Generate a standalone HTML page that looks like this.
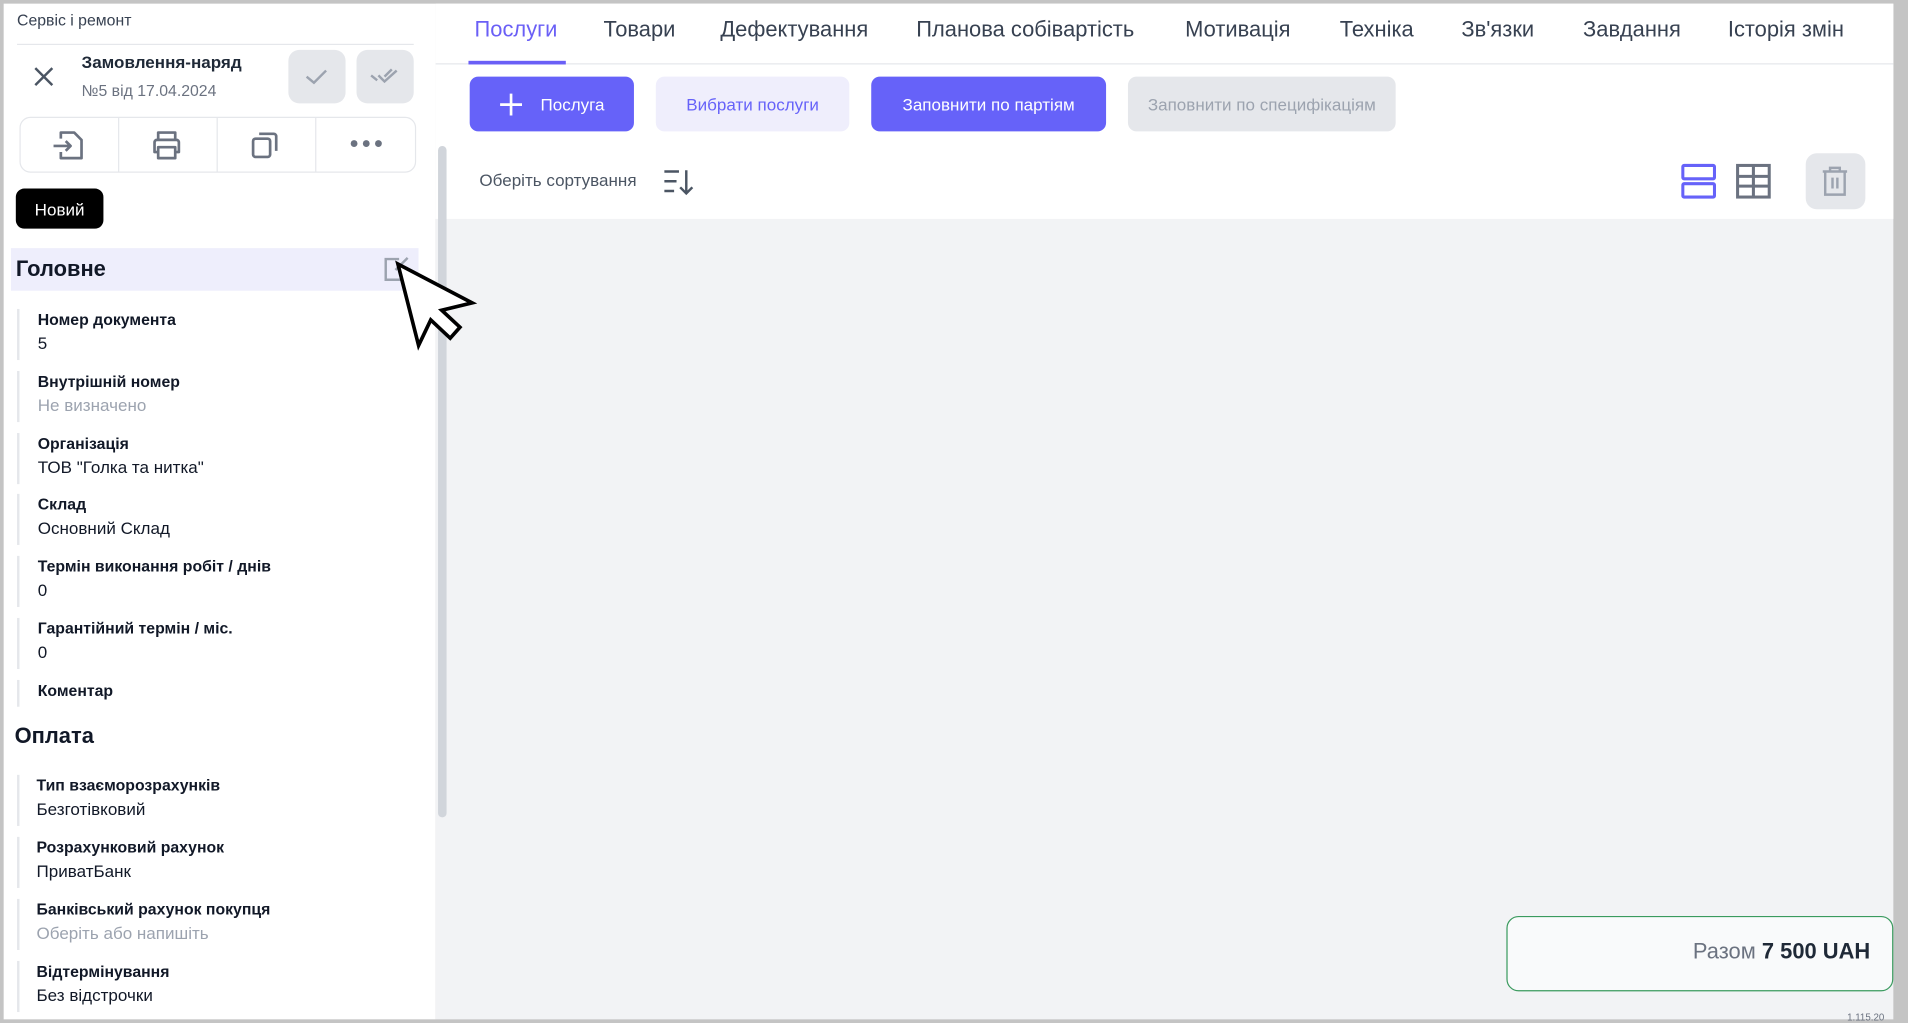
<!DOCTYPE html>
<html><head><meta charset="utf-8"><style>
*{box-sizing:border-box;margin:0;padding:0}
html,body{width:1908px;height:1023px;overflow:hidden;background:#c4c4c4;font-family:"Liberation Sans",Arial,sans-serif}
#w{position:absolute;left:0;top:0;width:1568px;height:841px;transform:scale(1.2168,1.2164);transform-origin:0 0;background:#c4c4c4}
.a{position:absolute}
.t{position:absolute;white-space:nowrap}
.lbl{font-size:13px;font-weight:bold;color:#111827}
.val{font-size:14px;color:#111827}
.ph{color:#9ca3af}
.fl{position:absolute;left:14px;width:2px;background:#e5e7eb}
.tab{position:absolute;top:14px;font-size:18px;color:#374151;white-space:nowrap}
.btn{position:absolute;top:63px;height:45px;border-radius:7px;font-size:14px;display:flex;align-items:center;justify-content:center;white-space:nowrap}
</style></head><body><div id="w">
<div class="a" style="left:3px;top:3px;width:355px;height:835px;background:#fff"></div>
<div class="a" style="left:358px;top:3px;width:1198px;height:835px;background:#f2f3f5"></div>
<div class="a" style="left:358px;top:3px;width:1198px;height:177px;background:#fff"></div>
<div class="a" style="left:358px;top:52px;width:1198px;height:1px;background:#e5e7eb"></div>
<div class="a" style="left:360px;top:120px;width:7px;height:552px;border-radius:4px;background:#d1d5db"></div>

<div class="t" style="left:14px;top:9px;font-size:13px;color:#374151">Сервіс і ремонт</div>
<div class="a" style="left:14px;top:36px;width:326px;height:1px;background:#e5e7eb"></div>
<svg class="a" style="left:26px;top:53px" width="20" height="20" viewBox="0 0 20 20"><path d="M3 3L17 17M17 3L3 17" stroke="#4b5563" stroke-width="2"/></svg>
<div class="t" style="left:67px;top:43px;font-size:14px;font-weight:bold;color:#1f2937">Замовлення-наряд</div>
<div class="t" style="left:67px;top:67px;font-size:13px;color:#6b7280">№5 від 17.04.2024</div>
<div class="a" style="left:237px;top:41px;width:47px;height:44px;border-radius:9px;background:#e5e7eb"></div>
<svg class="a" style="left:250px;top:54px" width="20" height="18" viewBox="0 0 20 18"><path d="M2 9L8 14L18 4" fill="none" stroke="#9ca3af" stroke-width="2"/></svg>
<div class="a" style="left:293px;top:41px;width:47px;height:44px;border-radius:9px;background:#e5e7eb"></div>
<svg class="a" style="left:304px;top:54px" width="26" height="18" viewBox="0 0 26 18"><path d="M1 8L6 12M7 8L12 13L22 4M12 9L18 3" fill="none" stroke="#9ca3af" stroke-width="2"/></svg>

<div class="a" style="left:16px;top:96px;width:326px;height:46px;border:1px solid #e5e7eb;border-radius:9px"></div>
<div class="a" style="left:97px;top:97px;width:1px;height:44px;background:#e5e7eb"></div>
<div class="a" style="left:178px;top:97px;width:1px;height:44px;background:#e5e7eb"></div>
<div class="a" style="left:259px;top:97px;width:1px;height:44px;background:#e5e7eb"></div>
<svg class="a" style="left:42px;top:106px" width="28" height="26" viewBox="0 0 28 26"><path d="M8 8V3H19L25 9V24H8V19M2 14H16M12 10L16 14L12 18" fill="none" stroke="#6b7280" stroke-width="2.2" stroke-linejoin="round"/></svg>
<svg class="a" style="left:123px;top:106px" width="28" height="26" viewBox="0 0 28 26"><path d="M7 9V3H21V9M7 19H4V11a2 2 0 0 1 2-2H22a2 2 0 0 1 2 2V19H21M7 15H21V24H7Z" fill="none" stroke="#6b7280" stroke-width="2.2" stroke-linejoin="round"/></svg>
<svg class="a" style="left:205px;top:106px" width="26" height="26" viewBox="0 0 26 26"><rect x="3" y="8" width="14" height="15" rx="2" fill="none" stroke="#6b7280" stroke-width="2.2"/><path d="M8 4H20a2 2 0 0 1 2 2V18" fill="none" stroke="#6b7280" stroke-width="2.2"/></svg>
<svg class="a" style="left:286px;top:113px" width="30" height="10"><circle cx="5" cy="5" r="2.8" fill="#6b7280"/><circle cx="15" cy="5" r="2.8" fill="#6b7280"/><circle cx="25" cy="5" r="2.8" fill="#6b7280"/></svg>

<div class="a" style="left:13px;top:155px;width:72px;height:33px;border-radius:7px;background:#000;color:#fff;font-size:14px;display:flex;align-items:center;justify-content:center">Новий</div>

<div class="a" style="left:9px;top:204px;width:335px;height:35px;background:#eeeefc"></div>
<div class="t" style="left:13px;top:211px;font-size:18px;font-weight:bold;color:#111827">Головне</div>
<svg class="a" style="left:314px;top:210px" width="24" height="22" viewBox="0 0 24 22"><path d="M14 3H3V20H20V10M21 2L11 12" fill="none" stroke="#9ca3af" stroke-width="2"/></svg>

<div class="fl" style="top:254px;height:42px"></div><div class="t lbl" style="left:31px;top:255px">Номер документа</div><div class="t val" style="left:31px;top:274px">5</div>
<div class="fl" style="top:305px;height:42px"></div><div class="t lbl" style="left:31px;top:306px">Внутрішній номер</div><div class="t val ph" style="left:31px;top:325px">Не визначено</div>
<div class="fl" style="top:356px;height:42px"></div><div class="t lbl" style="left:31px;top:357px">Організація</div><div class="t val" style="left:31px;top:376px">ТОВ "Голка та нитка"</div>
<div class="fl" style="top:406px;height:42px"></div><div class="t lbl" style="left:31px;top:407px">Склад</div><div class="t val" style="left:31px;top:426px">Основний Склад</div>
<div class="fl" style="top:457px;height:42px"></div><div class="t lbl" style="left:31px;top:458px">Термін виконання робіт / днів</div><div class="t val" style="left:31px;top:477px">0</div>
<div class="fl" style="top:508px;height:42px"></div><div class="t lbl" style="left:31px;top:509px">Гарантійний термін / міс.</div><div class="t val" style="left:31px;top:528px">0</div>
<div class="fl" style="top:559px;height:22px"></div><div class="t lbl" style="left:31px;top:560px">Коментар</div>

<div class="t" style="left:12px;top:595px;font-size:18px;font-weight:bold;color:#111827">Оплата</div>
<div class="fl" style="top:637px;height:42px"></div><div class="t lbl" style="left:30px;top:638px">Тип взаєморозрахунків</div><div class="t val" style="left:30px;top:657px">Безготівковий</div>
<div class="fl" style="top:688px;height:42px"></div><div class="t lbl" style="left:30px;top:689px">Розрахунковий рахунок</div><div class="t val" style="left:30px;top:708px">ПриватБанк</div>
<div class="fl" style="top:739px;height:42px"></div><div class="t lbl" style="left:30px;top:740px">Банківський рахунок покупця</div><div class="t val ph" style="left:30px;top:759px">Оберіть або напишіть</div>
<div class="fl" style="top:790px;height:42px"></div><div class="t lbl" style="left:30px;top:791px">Відтермінування</div><div class="t val" style="left:30px;top:810px">Без відстрочки</div>

<svg class="a" style="left:322px;top:212px" width="72" height="80" viewBox="0 0 72 80"><path d="M5 5L22 72L32 51L48 66L56 57L41 43L66 37Z" fill="#fff" stroke="#000" stroke-width="3" stroke-linejoin="miter"/></svg>

<div class="tab" style="left:390px;color:#6a5ff6">Послуги</div>
<div class="a" style="left:385px;top:50px;width:80px;height:3px;background:#6a5ff6"></div>
<div class="tab" style="left:496px">Товари</div>
<div class="tab" style="left:592px">Дефектування</div>
<div class="tab" style="left:753px">Планова собівартість</div>
<div class="tab" style="left:974px">Мотивація</div>
<div class="tab" style="left:1101px">Техніка</div>
<div class="tab" style="left:1201px">Зв'язки</div>
<div class="tab" style="left:1301px">Завдання</div>
<div class="tab" style="left:1420px">Історія змін</div>

<div class="btn" style="left:386px;width:135px;background:#6662f9;color:#fff"><svg width="20" height="20" style="margin-right:14px"><path d="M10 1V19M1 10H19" stroke="#fff" stroke-width="2.2"/></svg>Послуга</div>
<div class="btn" style="left:539px;width:159px;background:#efeefc;color:#6662f9">Вибрати послуги</div>
<div class="btn" style="left:716px;width:193px;background:#6662f9;color:#fff">Заповнити по партіям</div>
<div class="btn" style="left:927px;width:220px;background:#e5e7eb;color:#9ca3af">Заповнити по специфікаціям</div>

<div class="t" style="left:394px;top:140px;font-size:14px;color:#4b5563">Оберіть сортування</div>
<svg class="a" style="left:545px;top:138px" width="26" height="24" viewBox="0 0 26 24"><path d="M1 3H13M1 11H11M1 19H9M19 2V21M14 16L19 21L24 16" fill="none" stroke="#4b5563" stroke-width="2"/></svg>
<svg class="a" style="left:1381px;top:134px" width="30" height="30" viewBox="0 0 30 30"><rect x="2" y="2" width="26" height="11" rx="1" fill="none" stroke="#6662f9" stroke-width="2.5"/><rect x="2" y="17" width="26" height="11" rx="1" fill="none" stroke="#6662f9" stroke-width="2.5"/></svg>
<svg class="a" style="left:1426px;top:134px" width="30" height="30" viewBox="0 0 30 30"><rect x="2" y="2" width="26" height="26" fill="none" stroke="#6b7280" stroke-width="2.5"/><path d="M15 2V28M2 11H28M2 19H28" stroke="#6b7280" stroke-width="2.5"/></svg>
<div class="a" style="left:1484px;top:126px;width:49px;height:46px;border-radius:9px;background:#e5e7eb"></div>
<svg class="a" style="left:1496px;top:136px" width="24" height="26" viewBox="0 0 24 26"><path d="M2 5H22M8 5V2H16V5M4 5V24H20V5M10 10V19M14 10V19" fill="none" stroke="#9ca3af" stroke-width="2"/></svg>

<div class="a" style="left:1238px;top:753px;width:318px;height:62px;border:1.5px solid #3a9a5e;border-radius:10px;background:#f9fafb"></div>
<div class="t" style="right:31px;top:772px;font-size:18px;color:#6b7280">Разом <b style="color:#1f2937">7 500 UAH</b></div>
<div class="t" style="left:1518px;top:832px;font-size:8px;color:#6b7280">1.115.20</div>
</div></body></html>
